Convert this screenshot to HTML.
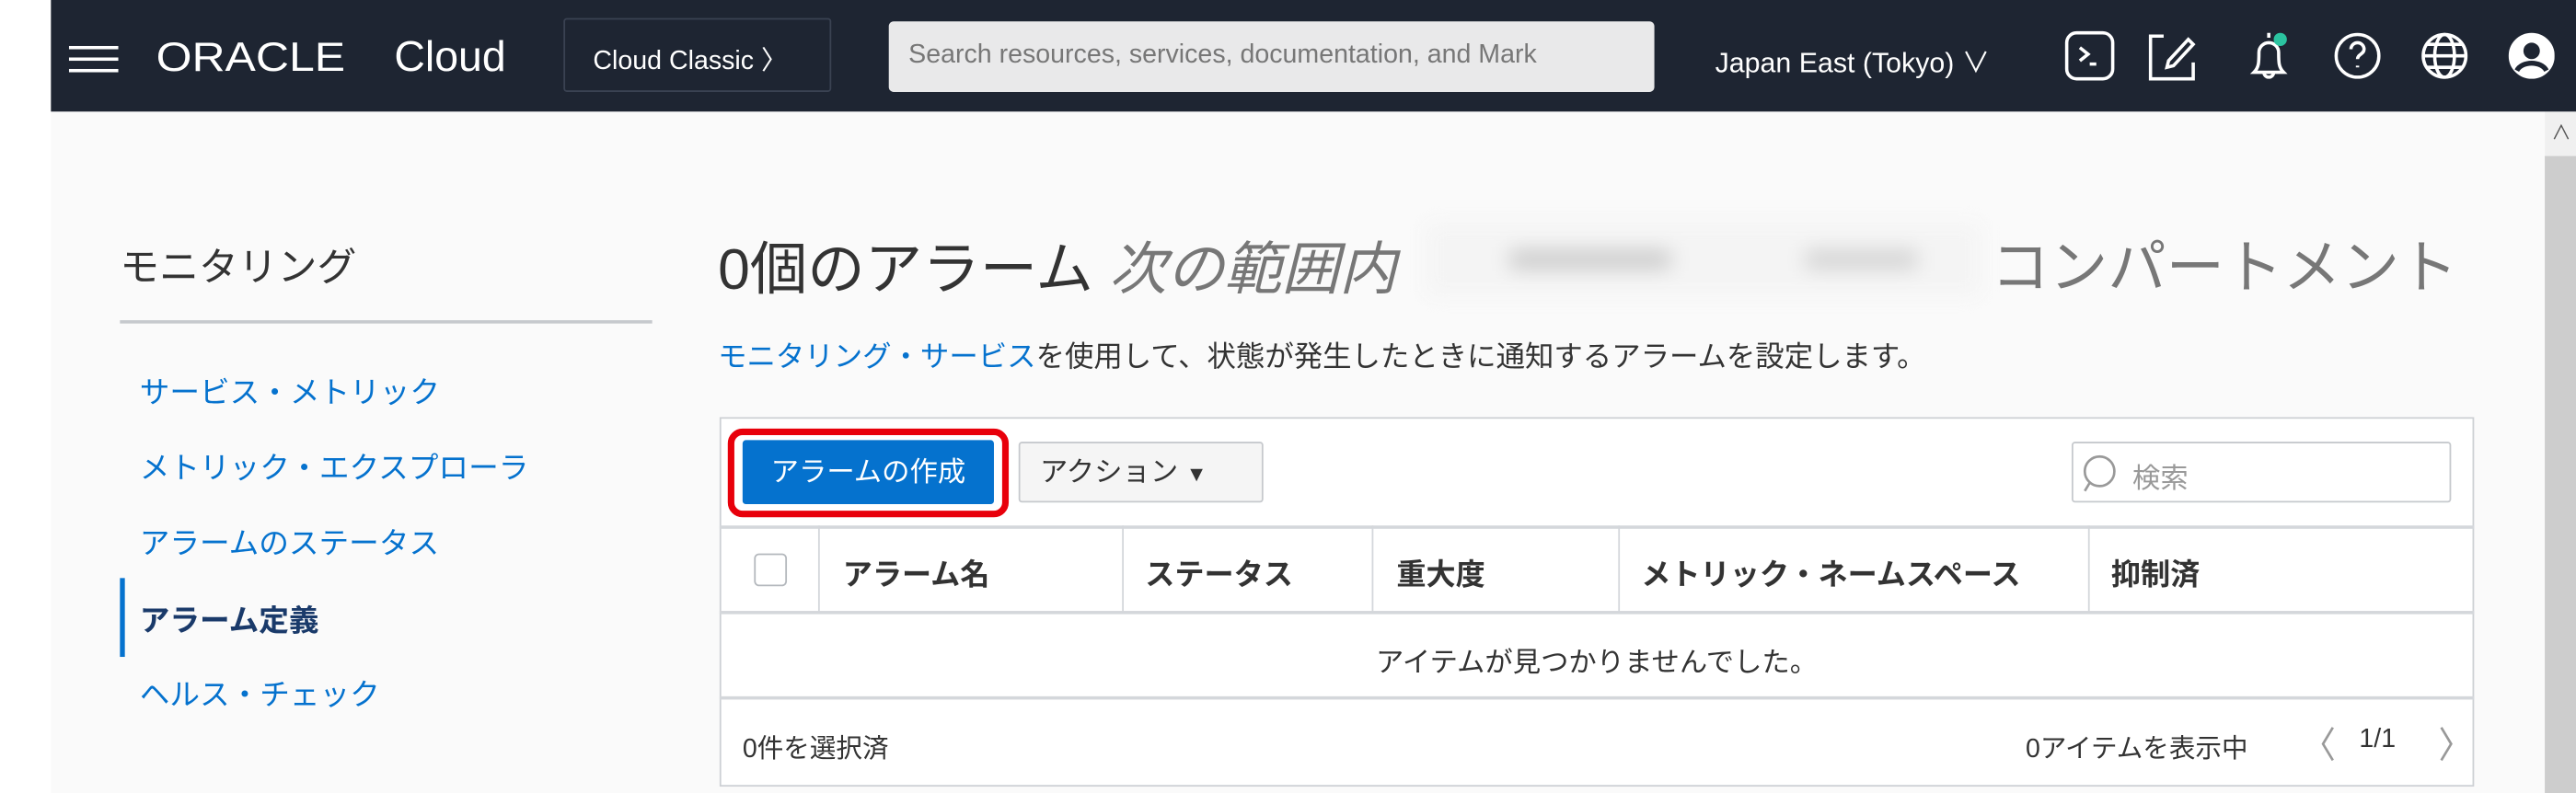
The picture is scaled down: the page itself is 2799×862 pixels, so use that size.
<!DOCTYPE html>
<html><head><meta charset="utf-8"><style>
*{box-sizing:border-box;margin:0;padding:0}
html,body{width:2799px;height:861px;overflow:hidden;background:#fff}
body{font-family:"Liberation Sans","Noto Sans CJK JP",sans-serif;color:#333}
#w{position:absolute;left:0;top:0;width:1568px;height:483px;transform:scale(1.78508);transform-origin:0 0;overflow:hidden}
.a{position:absolute;white-space:nowrap}
#hdr{position:absolute;left:31px;top:0;width:1537px;height:68px;background:#1e2532}
#main{position:absolute;left:31px;top:68px;width:1518px;height:415px;background:#fafafa}
#sb{position:absolute;left:1549px;top:68px;width:19px;height:415px;background:#f0f0f0}
.blue{color:#0572ce}
.nav{font-size:18.3px;left:85px}
.th{font-weight:bold;font-size:18px;top:336px}
.vl{position:absolute;top:320px;width:1px;height:53px;background:#d4d7db}
</style></head><body><div id="w">
<div id="hdr"></div>
<div id="main"></div>
<div id="sb"><div style="position:absolute;left:0;top:27px;width:19px;height:388px;background:#cdcdcd"></div><div class="a" style="left:4px;top:4px;font-size:12px;color:#555">∧</div></div>
<!-- header -->
<div class="a" style="left:42px;top:28px;width:30px;height:2px;background:#fff;box-shadow:0 7px 0 #fff,0 14px 0 #fff"></div>
<div class="a" style="left:95px;top:21px;color:#fff;font-size:25px;letter-spacing:0px;transform:scaleX(1.12);transform-origin:0 0">ORACLE</div>
<div class="a" style="left:240px;top:19px;color:#fff;font-size:26px">Cloud</div>
<div class="a" style="left:343px;top:11px;width:163px;height:45px;border:1px solid #3a4252;border-radius:2px"></div>
<div class="a" style="left:361px;top:23px;color:#fff;font-size:16px">Cloud Classic 〉</div>
<div class="a" style="left:541px;top:13px;width:466px;height:43px;background:#e9e9ea;border-radius:3px"></div>
<div class="a" style="left:553px;top:25px;color:#777;font-size:16px">Search resources, services, documentation, and Mark</div>
<div class="a" style="left:1044px;top:24px;color:#fff;font-size:17px">Japan East (Tokyo) ∨</div>
<svg class="a" style="left:1255px;top:16px" width="300" height="36" fill="none" stroke="#fff" stroke-width="2">
<rect x="3" y="4" width="28" height="28" rx="6"/><path d="M11 13l5 4-5 4M17 23h4"/>
<path d="M62 6h-8v26h26v-10M68 24l-4 1 1-4 12-13 3 3z"/>
<path d="M126 4v3M117 28c3-3 3-6 3-12a6 6 0 0112 0c0 6 0 9 3 12zM123 28a3 3 0 006 0"/><circle cx="133" cy="8" r="4" fill="#2bc3a0" stroke="none"/>
<circle cx="180" cy="18" r="13"/><path d="M176 14a4 4 0 118 0c0 3-4 3-4 6M180 24v1"/>
<circle cx="233" cy="18" r="13"/><ellipse cx="233" cy="18" rx="6" ry="13"/><path d="M220 18h26M222 11h22M222 25h22"/>
<circle cx="286" cy="18" r="13" fill="#fff"/><circle cx="286" cy="15" r="5" fill="#1e2532" stroke="none"/><path d="M277 27c3-6 15-6 18 0" stroke="#1e2532" stroke-width="3"/>
</svg>
<!-- nav -->
<div class="a" style="left:73px;top:143px;font-size:24px;color:#333">モニタリング</div>
<div class="a" style="left:73px;top:195px;width:324px;height:2px;background:#c6c9cd"></div>
<div class="a nav blue" style="top:225px">サービス・メトリック</div>
<div class="a nav blue" style="top:271px">メトリック・エクスプローラ</div>
<div class="a nav blue" style="top:317px">アラームのステータス</div>
<div class="a" style="left:73px;top:352px;width:3px;height:48px;background:#0572ce"></div>
<div class="a nav" style="top:364px;font-weight:bold;color:#1a3a6a">アラーム定義</div>
<div class="a nav blue" style="top:409px">ヘルス・チェック</div>
<!-- title -->
<div class="a" style="left:437px;top:136px;font-size:35px;color:#333">0個のアラーム <i style="color:#777">次の範囲内</i></div>
<div class="a" style="left:868px;top:136px;width:338px;height:44px;background:#f4f4f4;filter:blur(6px)"><div style="position:absolute;left:50px;top:16px;width:100px;height:12px;background:#ccc;border-radius:6px"></div><div style="position:absolute;left:230px;top:16px;width:70px;height:12px;background:#d4d4d4;border-radius:6px"></div></div>
<div class="a" style="left:1212px;top:135px;font-size:35.5px;color:#777">コンパートメント</div>
<div class="a" style="left:437px;top:204px;font-size:17.6px"><span class="blue">モニタリング・サービス</span>を使用して、状態が発生したときに通知するアラームを設定します。</div>
<!-- panel -->
<div class="a" style="left:438px;top:254px;width:1068px;height:225px;border:1px solid #cdd0d4;background:#fff"></div>
<div class="a" style="left:443px;top:261px;width:171px;height:54px;border:4px solid #e8000b;border-radius:9px"></div>
<div class="a" style="left:452px;top:268px;width:153px;height:39px;background:#0572ce;border-radius:2px;color:#fff;font-size:17px;text-align:center;line-height:39px">アラームの作成</div>
<div class="a" style="left:620px;top:269px;width:149px;height:37px;background:#f5f5f5;border:1px solid #c6c9cd;border-radius:2px;font-size:17px;line-height:35px;padding-left:12px">アクション <span style="font-size:13px">▼</span></div>
<div class="a" style="left:1261px;top:269px;width:231px;height:37px;border:1px solid #c6c9cd;border-radius:2px;background:#fff"></div>
<svg class="a" style="left:1267px;top:276px" width="24" height="26" fill="none" stroke="#999" stroke-width="1.5"><circle cx="11" cy="11" r="9"/><path d="M5 18l-3 5"/></svg>
<div class="a" style="left:1298px;top:277px;font-size:17px;color:#999">検索</div>
<div class="a" style="left:438px;top:320px;width:1068px;height:2px;background:#d4d7db"></div>
<div class="a" style="left:438px;top:372px;width:1068px;height:2px;background:#d4d7db"></div>
<div class="a" style="left:438px;top:424px;width:1068px;height:2px;background:#d4d7db"></div>
<div class="vl" style="left:498px"></div><div class="vl" style="left:683px"></div><div class="vl" style="left:835px"></div><div class="vl" style="left:985px"></div><div class="vl" style="left:1271px"></div>
<div class="a" style="left:459px;top:337px;width:20px;height:20px;border:1px solid #b4b8bd;border-radius:3px;background:#fff"></div>
<div class="a th" style="left:513px">アラーム名</div>
<div class="a th" style="left:697px">ステータス</div>
<div class="a th" style="left:850px">重大度</div>
<div class="a th" style="left:999px">メトリック・ネームスペース</div>
<div class="a th" style="left:1285px">抑制済</div>
<div class="a" style="left:438px;top:389px;width:1068px;text-align:center;font-size:17px">アイテムが見つかりませんでした。</div>
<div class="a" style="left:452px;top:442px;font-size:16px">0件を選択済</div>
<div class="a" style="left:1233px;top:442px;font-size:16px">0アイテムを表示中</div>
<svg class="a" style="left:1408px;top:440px" width="90" height="26" fill="none" stroke="#999" stroke-width="1.5"><path d="M12 3l-6 10 6 10M78 3l6 10-6 10"/></svg>
<div class="a" style="left:1436px;top:442px;font-size:16px">1/1</div>
</div></body></html>
